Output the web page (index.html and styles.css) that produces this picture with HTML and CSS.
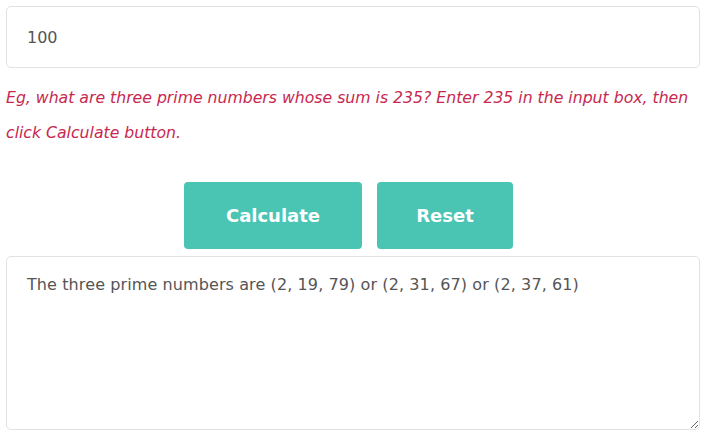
FILE: index.html
```html
<!DOCTYPE html>
<html lang="en">
<head>
    <meta charset="UTF-8">
    <meta name="viewport" content="width=device-width, initial-scale=1.0">
    <title>Three Prime Numbers Calculator</title>
    <link rel="stylesheet" href="styles.css">
</head>
<body>
    <div class="calc">
        <!-- Number input -->
        <input type="text" class="num-input" value="100">

        <p class="hint">Eg, what are three prime numbers whose sum is 235? Enter 235 in the input box, then click Calculate button.</p>

        <div class="actions">
            <button class="btn">Calculate</button>
            <button class="btn btn-reset">Reset</button>
        </div>

        <!-- Result -->
        <textarea class="result">The three prime numbers are (2, 19, 79) or (2, 31, 67) or (2, 37, 61)</textarea>
    </div>
</body>
</html>
```

FILE: styles.css
```css
* {
    box-sizing: border-box;
    margin: 0;
    padding: 0;
}

body {
    font-family: "DejaVu Sans", "Open Sans", sans-serif;
    background-color: #fff;
    color: #555;
}

.calc {
    padding: 6px 14px 0 6px;
    display: flex;
    flex-direction: column;
}

.num-input {
    height: 62px;
    width: 100%;
    border: 1px solid #e2e2e2;
    border-radius: 5px;
    padding: 0 20px;
    font-family: inherit;
    font-size: 16px;
    color: #555;
    outline: none;
}

.hint {
    margin-top: 12px;
    font-size: 15.7px;
    font-style: italic;
    line-height: 35px;
    color: #c8284f;
}

.actions {
    display: flex;
    justify-content: center;
    gap: 15px;
    margin-top: 32px;
    padding-right: 9px;
}

.btn {
    width: 178px;
    height: 67px;
    border: none;
    border-radius: 4px;
    background-color: #4ac4b3;
    color: #fff;
    font-family: inherit;
    font-size: 18px;
    font-weight: bold;
    cursor: pointer;
}

.btn-reset {
    width: 136px;
}

.result {
    margin-top: 7px;
    height: 174px;
    width: 100%;
    border: 1px solid #e2e2e2;
    border-radius: 5px;
    padding: 16px 20px;
    font-family: inherit;
    font-size: 16px;
    letter-spacing: 0.1px;
    line-height: 24px;
    color: #555;
    outline: none;
}
```
